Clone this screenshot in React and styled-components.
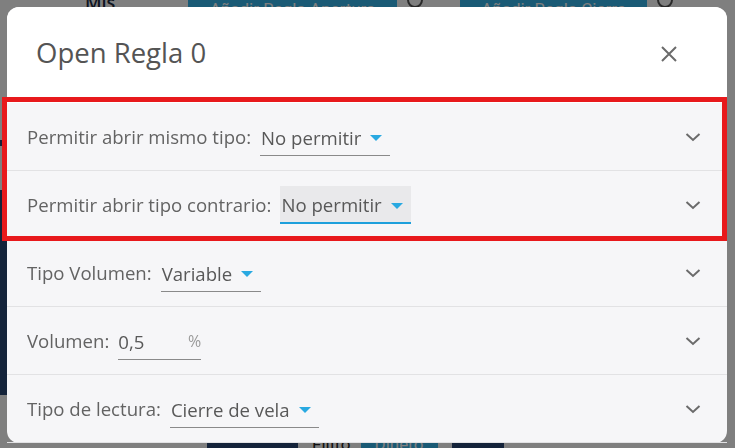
import React from 'react';
import styled, { createGlobalStyle } from 'styled-components';

const GlobalStyle = createGlobalStyle`
    html, body {
        margin: 0;
        padding: 0;
        width: 100%;
        height: 100%;
        overflow: hidden;
    }
    body {
        font-family: "Open Sans", "Noto Sans", sans-serif;
        background-color: #fff;
    }
`;

const rules = [
    { label: 'Permitir abrir mismo tipo:', value: 'No permitir', type: 'select' },
    { label: 'Permitir abrir tipo contrario:', value: 'No permitir', type: 'select', focused: true },
    { label: 'Tipo Volumen:', value: 'Variable', type: 'select' },
    { label: 'Volumen:', value: '0,5', type: 'input', unit: '%' },
    { label: 'Tipo de lectura:', value: 'Cierre de vela', type: 'select' },
];

const Chevron = () => (
    <svg width="16" height="10" viewBox="0 0 16 10">
        <path d="M1.5 2 L8 8 L14.5 2" fill="none" stroke="#6b6b6b" strokeWidth="2" />
    </svg>
);

const CloseIcon = () => (
    <svg width="16" height="16" viewBox="0 0 16 16">
        <path d="M1 1 L15 15 M15 1 L1 15" fill="none" stroke="#6b6b6b" strokeWidth="2" />
    </svg>
);

const App = () => {
    return (
        <>
            <GlobalStyle />
            <Page>
                <TopBar>
                    <PageTitle>Mis</PageTitle>
                    <AddButton width={209}>Añadir Regla Apertura</AddButton>
                    <InfoDot gap={37} />
                    <AddButton width={187}>Añadir Regla Cierre</AddButton>
                    <InfoDot gap={0} />
                </TopBar>
                <PageBody>
                    <SideStrip />
                    <SideCard />
                    <FilterBar>
                        <DarkBlock width={91} />
                        <FilterLabel>Filtro</FilterLabel>
                        <FilterChip>Dinero</FilterChip>
                        <DarkBlock width={52} />
                    </FilterBar>
                </PageBody>
            </Page>
            <Overlay>
                <Modal>
                    <Header>
                        <Title>Open Regla 0</Title>
                        <CloseButton><CloseIcon /></CloseButton>
                    </Header>
                    <Rows>
                        {rules.map((r, i) => (
                            <Row key={i}>
                                <Label>{r.label}</Label>
                                {r.type === 'select' ? (
                                    <Select focused={r.focused}>
                                        <span>{r.value}</span>
                                        <Caret />
                                    </Select>
                                ) : (
                                    <NumberField>
                                        <span>{r.value}</span>
                                        <Unit>{r.unit}</Unit>
                                    </NumberField>
                                )}
                                <Expand><Chevron /></Expand>
                            </Row>
                        ))}
                        <Highlight />
                    </Rows>
                </Modal>
            </Overlay>
        </>
    );
};

export default App;

const Page = styled.div`
    width: 100%;
    height: 100vh;
    background-color: #fff;
    display: flex;
    flex-direction: column;
`;
const TopBar = styled.div`
    height: 30px;
    display: flex;
    align-items: flex-start;
    padding-left: 85px;
`;
const PageTitle = styled.div`
    width: 103px;
    color: #1a2a40;
    font-size: 18px;
    font-weight: 600;
    line-height: 24px;
    margin-top: -10px;
`;
const AddButton = styled.div`
    width: ${p => p.width}px;
    height: 26px;
    margin-top: -6px;
    background-color: #34b4ea;
    color: #fff;
    font-family: Roboto, sans-serif;
    font-size: 17px;
    text-align: center;
    line-height: 30px;
`;
const InfoDot = styled.div`
    width: 12px;
    height: 12px;
    border: 2px solid #555;
    border-radius: 50%;
    margin: -8px ${p => p.gap}px 0 10px;
`;
const PageBody = styled.div`
    flex: 1;
    display: flex;
    flex-direction: column;
    padding-top: 110px;
`;
const SideStrip = styled.div`
    width: 40px;
    height: 6px;
    background-color: #284674;
`;
const SideCard = styled.div`
    width: 40px;
    height: 205px;
    margin-top: 44px;
    background-color: #284674;
`;
const FilterBar = styled.div`
    height: 14px;
    margin-top: auto;
    display: flex;
    gap: 14px;
    padding-left: 207px;
    font-family: Roboto, sans-serif;
    font-size: 17px;
    line-height: 20px;
`;
const DarkBlock = styled.div`
    width: ${p => p.width}px;
    background-color: #284674;
`;
const FilterLabel = styled.div`
    color: #222;
`;
const FilterChip = styled.div`
    background-color: #34b4ea;
    color: #fff;
    padding: 0 14px;
    margin-left: -4px;
`;
const Overlay = styled.div`
    position: fixed;
    inset: 0;
    background-color: rgba(0, 0, 0, 0.5);
    display: flex;
    justify-content: center;
    align-items: flex-start;
    padding-top: 7px;
`;
const Modal = styled.div`
    width: 720px;
    height: 436px;
    margin-left: -1px;
    border-radius: 12px;
    background-color: #f6f6f8;
    display: flex;
    flex-direction: column;
`;
const Header = styled.div`
    height: 96px;
    flex-shrink: 0;
    background-color: #fff;
    border-radius: 12px 12px 0 0;
    display: flex;
    align-items: center;
    justify-content: space-between;
    padding: 0 50px 0 29px;
    box-sizing: border-box;
`;
const Title = styled.h2`
    margin: -6px 0 0 0;
    font-size: 27.5px;
    font-weight: 400;
    color: #545454;
`;
const CloseButton = styled.div`
    display: flex;
    width: 16px;
    height: 16px;
    margin-top: -2px;
`;
const Rows = styled.div`
    position: relative;
    flex: 1;
    border-radius: 0 0 12px 12px;
    display: flex;
    flex-direction: column;
`;
const Row = styled.div`
    height: 68px;
    box-sizing: border-box;
    display: flex;
    align-items: center;
    padding: 0 26px 0 20px;
    border-bottom: 1px solid #e2e2e4;
    &:last-of-type {
        border-bottom: none;
    }
`;
const Label = styled.div`
    font-size: 18.6px;
    color: #636363;
    margin-right: 9px;
`;
const Select = styled.div`
    height: 38px;
    box-sizing: border-box;
    display: inline-flex;
    align-items: center;
    gap: 9px;
    padding: 2px 8px 0 1px;
    font-size: 18.6px;
    color: #585858;
    background-color: ${p => (p.focused ? '#e9e9eb' : 'transparent')};
    border-bottom: ${p => (p.focused ? '2px solid #1ea0dc' : '1px solid #8a8a8a')};
`;
const Caret = styled.i`
    width: 0;
    height: 0;
    border-left: 6px solid transparent;
    border-right: 6px solid transparent;
    border-top: 6px solid #29a9e1;
    margin-top: 2px;
`;
const NumberField = styled.div`
    width: 83px;
    height: 38px;
    box-sizing: border-box;
    display: inline-flex;
    align-items: center;
    justify-content: space-between;
    padding-top: 2px;
    font-size: 18.6px;
    color: #585858;
    border-bottom: 1px solid #8a8a8a;
`;
const Unit = styled.span`
    color: #9a9a9a;
    font-size: 16px;
`;
const Expand = styled.div`
    margin-left: auto;
    display: flex;
`;
const Highlight = styled.div`
    position: absolute;
    left: -5px;
    top: -6px;
    width: 725px;
    height: 144px;
    box-sizing: border-box;
    border: 5px solid #e8191c;
    pointer-events: none;
`;
